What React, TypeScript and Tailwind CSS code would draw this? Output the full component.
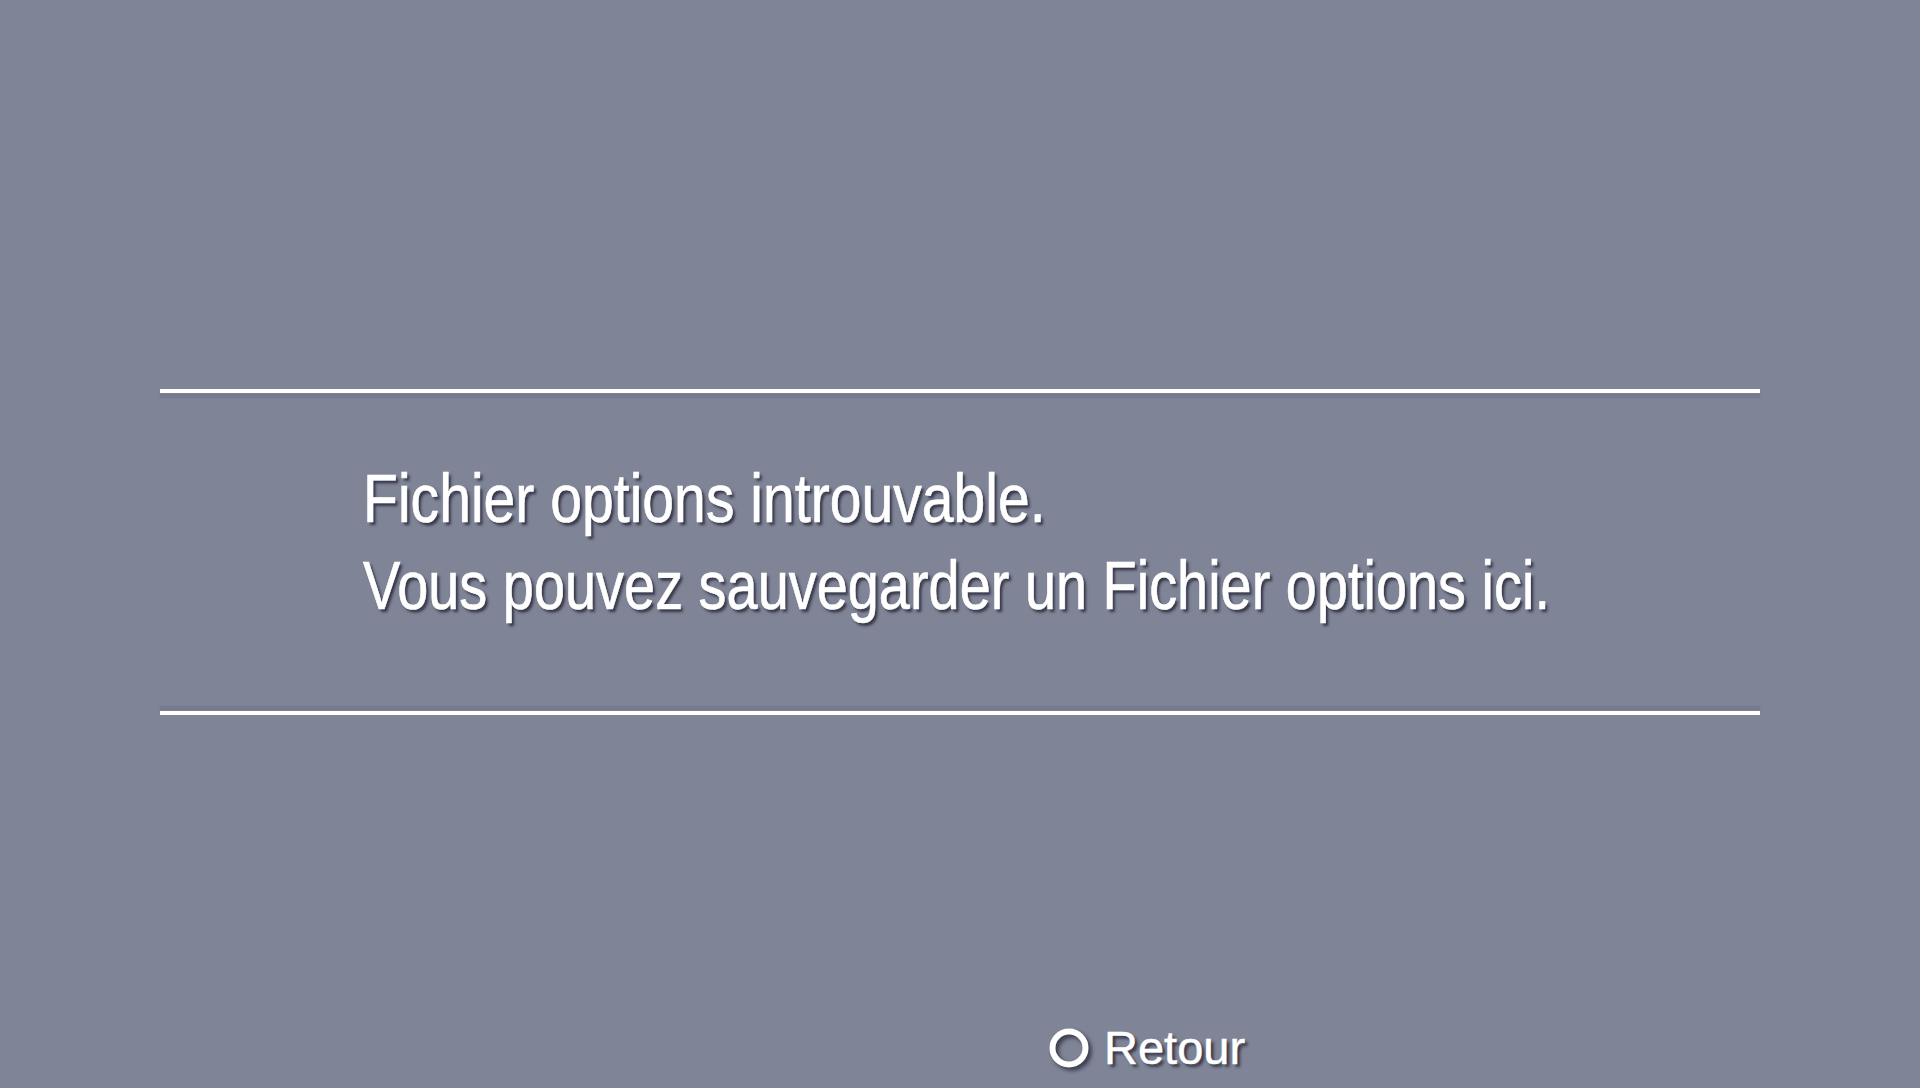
import React from "react";

export default function App() {
  return (
    <div className="w-[1920px] h-[1088px] overflow-hidden bg-[#7f8497] flex flex-col text-white font-['Liberation_Sans',Arial,sans-serif]">
      <div className="mt-[389px] mx-[160px] h-[4px] bg-white shadow-[0_5px_2px_rgba(40,40,60,0.12)]" />
      <div className="mt-[62px] pl-[363px] text-[68px] leading-[87px] [-webkit-text-stroke:0.7px_white] [text-shadow:3px_3px_3px_rgba(30,30,45,0.75)]">
        <div className="origin-left scale-x-[0.84] whitespace-nowrap">Fichier options introuvable.</div>
        <div className="origin-left scale-x-[0.822] whitespace-nowrap">Vous pouvez sauvegarder un Fichier options ici.</div>
      </div>
      <div className="mt-[82px] mx-[160px] h-[4px] bg-white shadow-[0_-5px_2px_rgba(40,40,60,0.12)]" />
      <div className="mt-[309px] pl-[1049px] flex items-center gap-[15px] h-[47px]">
        <svg
          width="40"
          height="40"
          viewBox="0 0 40 40"
          className="[filter:drop-shadow(3px_3px_2px_rgba(30,30,45,0.75))]"
        >
          <circle cx="20" cy="20" r="16.5" fill="none" stroke="white" strokeWidth="6" />
        </svg>
        <span className="text-[47px] leading-[47px] whitespace-nowrap [-webkit-text-stroke:0.5px_white] [text-shadow:3px_3px_3px_rgba(30,30,45,0.75)]">
          Retour
        </span>
      </div>
    </div>
  );
}
